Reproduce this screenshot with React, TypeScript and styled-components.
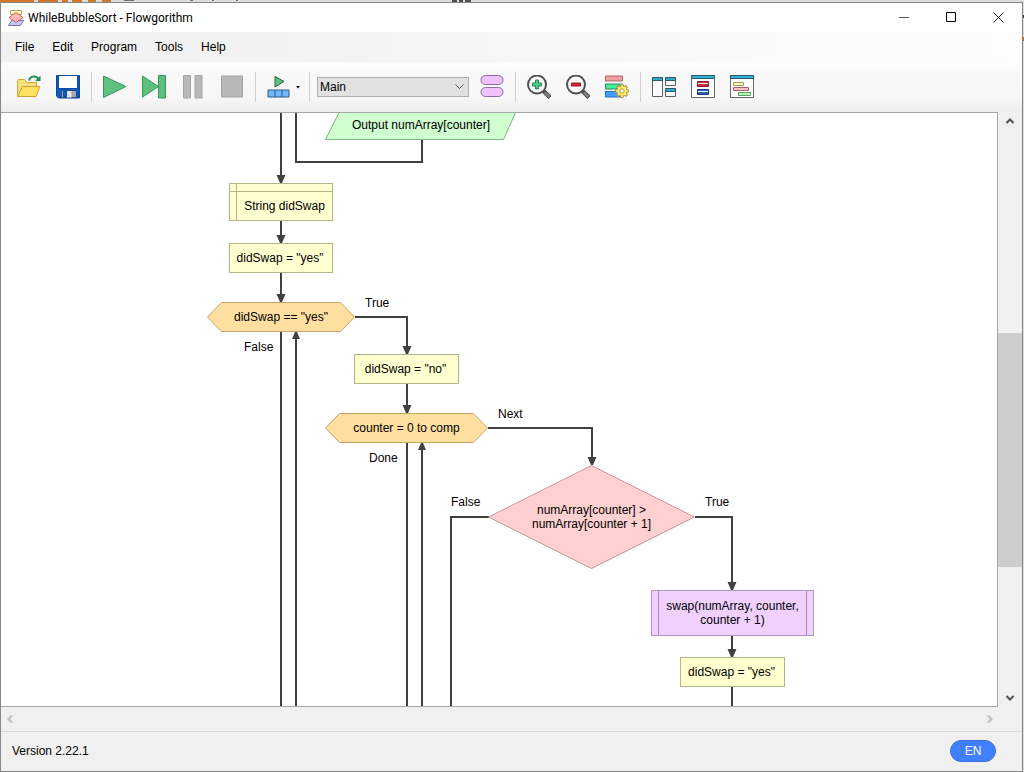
import React from 'react';
import styled, { createGlobalStyle } from 'styled-components';

const GlobalStyle = createGlobalStyle`
  * { box-sizing: border-box; }
  body { margin: 0; background: #dedede; }
  body, button, select { font-family: "Liberation Sans", Arial, sans-serif; font-size: 12px; color: #000; }
  svg { display: block; flex: none; }
`;

const LINE = '#404040';

/* ---------- window frame ---------- */

const Desktop = styled.div`
  position: relative;
  display: flex;
  height: 100vh;
  min-height: 480px;
  padding: 2px 1px 0 0;
  background: #dedede;
`;

const Backdrop = styled.svg`
  position: absolute;
  top: 0;
  left: 0;
`;

const EdgeMarks = styled.svg`
  position: absolute;
  top: 0;
  right: 0;
`;

const Window = styled.div`
  position: relative;
  flex: 1;
  min-width: 0;
  display: flex;
  flex-direction: column;
  border: 1px solid #868686;
  background: #f0f0f0;
`;

const TitleBar = styled.header`
  display: flex;
  align-items: center;
  height: 29px;
  padding-left: 7px;
  background: #fff;
`;

const Title = styled.h1`
  flex: 1;
  margin: 0 0 0 4px;
  font: 400 12px/16px Roboto, "Open Sans", sans-serif;
`;

const PlainButton = styled.button`
  display: flex;
  align-items: center;
  justify-content: center;
  padding: 0;
  border: 0;
  background: none;
`;

const WindowButton = styled(PlainButton)`
  width: 47px;
  height: 29px;
`;

const MenuBar = styled.nav`
  display: flex;
  height: 30px;
  padding-left: 5px;
  background: linear-gradient(90deg, #f0f0f0, #f3f3f3 30%, #fbfbfb 80%, #fcfcfc);
`;

const MenuItem = styled(PlainButton)`
  padding: 0 9px;
`;

const Toolbar = styled.div`
  display: flex;
  align-items: center;
  height: 50px;
  padding: 0 16px;
  background: linear-gradient(#fcfcfc, #f8f8f8 30%, #f7f7f7 70%, #eeeeee);
`;

const ToolGroup = styled.div`
  display: flex;
  align-items: center;
  gap: 15px;
`;

const ToolButton = styled(PlainButton)`
  height: 24px;
`;

const Separator = styled.div<{ $tight?: boolean }>`
  width: 1px;
  height: 30px;
  margin: 0 ${p => (p.$tight ? 7 : 11)}px;
  background: #d0d0d0;
`;

const SelectBox = styled.label`
  position: relative;
  margin-right: 11px;
`;

const FunctionSelect = styled.select`
  display: block;
  width: 152px;
  height: 20px;
  padding: 0 2px;
  border: 1px solid #adadad;
  border-radius: 0;
  background: #e1e1e1;
  appearance: none;
`;

const SelectArrow = styled.svg`
  position: absolute;
  top: 7px;
  right: 5px;
  pointer-events: none;
`;

/* ---------- work area ---------- */

const WorkArea = styled.main`
  flex: 1;
  min-height: 0;
  display: grid;
  grid-template-columns: minmax(0, 1fr) 24px;
  grid-template-rows: minmax(0, 1fr) 24px;
`;

const Canvas = styled.section`
  position: relative;
  overflow: hidden;
  border: solid #a6a6a6;
  border-width: 1px 1px 1px 0;
  background: #fff;
`;

const VerticalScroll = styled.div`
  display: flex;
  flex-direction: column;
`;

const HorizontalScroll = styled.div`
  display: flex;
  justify-content: space-between;
`;

const ScrollButton = styled(PlainButton)`
  width: 24px;
  height: 18px;
`;

const SideScrollButton = styled(PlainButton)`
  width: 17px;
  height: 24px;
`;

const Track = styled.div`
  flex: 1;
  display: grid;
  grid-template-rows: 203fr 235fr 122fr;
`;

const Thumb = styled.div`
  grid-row: 2;
  background: #cdcdcd;
`;

const StatusBar = styled.footer`
  display: flex;
  align-items: center;
  justify-content: space-between;
  height: 40px;
  padding: 0 26px 2px 11px;
  border-top: 1px solid #dadada;
`;

const LanguageButton = styled(PlainButton)`
  width: 46px;
  height: 22px;
  border: 1px solid #3a6fd8;
  border-radius: 11px;
  background: #4080ff;
  color: #fff;
`;

/* ---------- flowchart ---------- */

type Place = { $x: number; $y: number };

const Wires = styled.svg`
  position: absolute;
  top: 0;
  left: 0;
  fill: none;
  stroke: ${LINE};
  stroke-width: 2px;
`;

const Node = styled.div<Place & { $w: number; $h: number }>`
  position: absolute;
  left: ${p => p.$x}px;
  top: ${p => p.$y}px;
  width: ${p => p.$w}px;
  height: ${p => p.$h}px;
  display: flex;
  align-items: center;
  justify-content: center;
  text-align: center;
  line-height: 14px;
`;

const AssignNode = styled(Node)`
  padding-right: 2px;
  border: 1px solid #b4b48c;
  background: #ffffd0;
`;

const DeclareNode = styled(AssignNode)`
  padding: 8px 0 0 7px;
  background:
    linear-gradient(#b4b48c, #b4b48c) 0 7px / 100% 1px no-repeat,
    linear-gradient(#b4b48c, #b4b48c) 6px 0 / 1px 100% no-repeat,
    #ffffd0;
`;

const CallNode = styled(Node)`
  border: 1px solid #b496c3;
  background:
    linear-gradient(#a888b8, #a888b8) 6px 0 / 1px 100% no-repeat,
    linear-gradient(#a888b8, #a888b8) right 6px top 0 / 1px 100% no-repeat,
    #f0d0ff;
`;

const ShapeSvg = styled.svg`
  position: absolute;
  inset: 0;
  overflow: visible;
`;

const NodeText = styled.span`
  position: relative;
`;

const Label = styled.span<Place>`
  position: absolute;
  left: ${p => p.$x}px;
  top: ${p => p.$y}px;
  line-height: 14px;
`;

type ShapeProps = {
  x: number; y: number; w: number; h: number;
  points: string; fill: string; stroke: string; children: React.ReactNode;
};

function ShapeNode({ x, y, w, h, points, fill, stroke, children }: ShapeProps) {
  return (
    <Node $x={x} $y={y} $w={w} $h={h}>
      <ShapeSvg width={w} height={h} aria-hidden="true">
        <polygon points={points} fill={fill} stroke={stroke} />
      </ShapeSvg>
      <NodeText>{children}</NodeText>
    </Node>
  );
}

function LoopNode({ x, y, w, children }: { x: number; y: number; w: number; children: React.ReactNode }) {
  return (
    <ShapeNode
      x={x} y={y} w={w} h={30}
      points={`0.5,15 14.5,0.5 ${w - 14.5},0.5 ${w - 0.5},15 ${w - 14.5},29.5 14.5,29.5`}
      fill="#ffdfa0" stroke="#c8a668"
    >
      {children}
    </ShapeNode>
  );
}

const wires = [
  'M280 0V66', 'M295 0V49H421V27', 'M280 108V125', 'M280 160V184',
  'M354 204H406V236', 'M280 219V700', 'M295 700V224', 'M406 271V295',
  'M487 315H591V347', 'M406 330V700', 'M421 700V335', 'M488 404H450V700',
  'M694 404H731V472', 'M731 523V539', 'M731 574V700',
];

const arrowsDown: [number, number][] = [
  [280, 70], [280, 130], [280, 189], [406, 241], [406, 300], [591, 352], [731, 477], [731, 544],
];

const arrowsUp: [number, number][] = [[295, 219], [421, 330]];

function Flowchart() {
  return (
    <>
      <Wires width="996" height="700" aria-hidden="true">
        {wires.map(d => <path key={d} d={d} />)}
        <g fill={LINE} stroke="none">
          {arrowsDown.map(([x, y]) => <path key={`${x}-${y}`} d={`M${x - 4.5} ${y - 8}H${x + 4.5}L${x + 1} ${y}H${x - 1}Z`} />)}
          {arrowsUp.map(([x, y]) => <path key={`${x}-${y}`} d={`M${x - 4} ${y + 7}H${x + 4}L${x + 1} ${y}H${x - 1}Z`} />)}
        </g>
      </Wires>

      <ShapeNode x={324} y={-3} w={192} h={30} points="15,0.5 191.5,0.5 178.5,29.5 0.5,29.5" fill="#d0ffd0" stroke="#80b480">
        Output numArray[counter]
      </ShapeNode>
      <DeclareNode $x={228} $y={70} $w={104} $h={38}>String didSwap</DeclareNode>
      <AssignNode $x={228} $y={130} $w={104} $h={30}>didSwap = "yes"</AssignNode>
      <LoopNode x={206} y={189} w={148}>didSwap == "yes"</LoopNode>
      <AssignNode $x={353} $y={241} $w={105} $h={30}>didSwap = "no"</AssignNode>
      <LoopNode x={324} y={300} w={163}>counter = 0 to comp</LoopNode>
      <ShapeNode x={487} y={352} w={207} h={104} points="0.5,52 103.5,0.5 206.5,52 103.5,103.5" fill="#ffd0d0" stroke="#c49696">
        numArray[counter] &gt;<br />numArray[counter + 1]
      </ShapeNode>
      <CallNode $x={650} $y={477} $w={163} $h={46}>swap(numArray, counter,<br />counter + 1)</CallNode>
      <AssignNode $x={679} $y={544} $w={105} $h={30}>didSwap = "yes"</AssignNode>

      <Label $x={364} $y={183}>True</Label>
      <Label $x={243} $y={227}>False</Label>
      <Label $x={497} $y={294}>Next</Label>
      <Label $x={368} $y={338}>Done</Label>
      <Label $x={450} $y={382}>False</Label>
      <Label $x={704} $y={382}>True</Label>
    </>
  );
}

/* ---------- icons ---------- */

function Icon({ children, size = 24 }: { children: React.ReactNode; size?: number }) {
  return <svg width={size} height={size} viewBox={`0 0 ${size} ${size}`} fill="none" aria-hidden="true">{children}</svg>;
}

const AppIcon = () => (
  <Icon size={16}>
    <path d="M3.5 10.5h12l-3 5h-12z" fill="#c8c8ff" stroke="#7474c0" />
    <path d="M2.5.5h11v4h-11z" fill="#ffffb8" stroke="#b8a060" />
    <path d="M8 2.5l7 5-7 5-7-5z" fill="#ffb8b8" stroke="#c86464" />
  </Icon>
);

const OpenIcon = () => (
  <Icon>
    <path d="M.5 21V5.500l1-1h6l2 3h10v4" fill="#f4e07c" stroke="#d0a838" />
    <path d="M.5 21.500l5-10h17.500l-4 10z" fill="#ffe060" stroke="#d0a030" />
    <path d="M12 5.500c1-5 8-5.500 9.500-1" stroke="#2c8c58" strokeWidth="2" />
    <path d="M18 6h5.500V.500z" fill="#2c8c58" />
  </Icon>
);

const SaveIcon = () => (
  <Icon>
    <path d="M.5.5h23v22.500H2.500l-2-2z" fill="#0c5cc4" stroke="#0a48a0" />
    <path d="M3 1h18v12H3z" fill="#fff" />
    <path d="M2.500 1v12.500h19V1" stroke="#0a48a0" />
    <path d="M5.500 15.500h15v7h-15z" fill="#a8a8b0" stroke="#284888" />
    <path d="M11 16h4.500v6.500H11z" fill="#e4e4e4" />
    <path d="M7.500 16.500h3v5h-3z" fill="#0c5cc4" stroke="#0a48a0" />
  </Icon>
);

const PlayIcon = () => <Icon><path d="M.5 1v21.500L23 11.500z" fill="#60c080" stroke="#309858" /></Icon>;
const StepIcon = () => (
  <Icon>
    <path d="M.5 1v21L16.500 11.500z" fill="#60c080" stroke="#309858" />
    <path d="M16.500.5h7v22.500h-7z" fill="#60c080" stroke="#309858" />
  </Icon>
);
const PauseIcon = () => <Icon><path d="M2.500.5h7v22.500h-7zM14 .5h7v22.500h-7z" fill="#b8b8b8" stroke="#a4a4a4" /></Icon>;
const StopIcon = () => <Icon><path d="M1.500 1h21v21h-21z" fill="#b8b8b8" stroke="#a4a4a4" /></Icon>;

const SpeedIcon = () => (
  <svg width="35" height="24" viewBox="0 0 35 24" fill="none" aria-hidden="true">
    <path d="M8 1.500v10.500l9-5.500z" fill="#60c080" stroke="#305840" />
    <path d="M1 15h21v7H1zM8 15v7M15 15v7" fill="#70b8ff" stroke="#305880" />
    <path d="M29 11h4l-2 2.500z" fill="#000" />
  </svg>
);

const FunctionsIcon = () => (
  <Icon>
    <rect x="1" y=".5" width="22" height="9" rx="4.500" fill="#f0c0ff" stroke="#8c6c9c" />
    <rect x="1" y="12.500" width="22" height="9" rx="4.500" fill="#f0c0ff" stroke="#8c6c9c" />
  </Icon>
);

const Magnifier = ({ children }: { children: React.ReactNode }) => (
  <Icon>
    <path d="M16 15.500l7 7" stroke="#505050" strokeWidth="4.500" />
    <path d="M18 17.500l4.300 4.300" stroke="#808080" strokeWidth="2.500" />
    <circle cx="10" cy="9.500" r="9" fill="#fafafa" stroke="#505050" strokeWidth="2" />
    {children}
  </Icon>
);

const ZoomInIcon = () => (
  <Magnifier>
    <path d="M8.500 5h3v3h3v3h-3v3h-3v-3h-3V8h3z" fill="#50c888" stroke="#288850" />
  </Magnifier>
);

const ZoomOutIcon = () => <Magnifier><path d="M5.500 8h9v3h-9z" fill="#d02838" stroke="#a01824" /></Magnifier>;

const gearTeeth = [0, 45, 90, 135, 180, 225, 270, 315];

const StyleIcon = () => (
  <Icon>
    <path d="M.5 1h17v5H.5z" fill="#f4a0a0" stroke="#a86868" />
    <path d="M.5 9h17v5H.5z" fill="#40f0a0" stroke="#308860" />
    <path d="M.5 16.500h17v5.500H.5z" fill="#40a0ff" stroke="#3070b0" />
    {gearTeeth.map(a => (
      <path key={a} d="M15.500 12l.4-2.500h2.200l.4 2.500" transform={`rotate(${a} 17 16)`} fill="#fff070" stroke="#b09438" />
    ))}
    <circle cx="17" cy="16" r="4.600" fill="#fff070" />
    <circle cx="17" cy="16" r="2.200" fill="#fff" stroke="#b09438" />
  </Icon>
);

const LayoutIcon = () => (
  <Icon>
    <path d="M.5 2.500h10v19H.5zM13.500 2.500h10v8h-10zM13.500 13.500h10v8h-10z" fill="#fff" stroke="#606060" />
    <path d="M.5 2.500h10v3H.5zM13.500 2.500h10v3h-10zM13.500 13.500h10v3h-10z" fill="#30a8d0" stroke="#305868" />
  </Icon>
);

const PanelFrame = () => (
  <>
    <path d="M.5.5h23v22H.5z" fill="#fff" stroke="#686868" />
    <path d="M.5.5h23v3H.5z" fill="#30b0d8" stroke="#305868" />
  </>
);

const VariablesIcon = () => (
  <Icon>
    <PanelFrame />
    <path d="M6.500 6.500h11v5h-11z" fill="#c83040" stroke="#901828" />
    <path d="M7 8.500h10" stroke="#fff" />
    <path d="M6.500 14.500h11v5h-11z" fill="#2860c0" stroke="#183880" />
    <path d="M7 16.500h10" stroke="#fff" />
  </Icon>
);

const ConsoleIcon = () => (
  <Icon>
    <PanelFrame />
    <path d="M3.500 7.500h10v3h-10z" fill="#fff8b0" stroke="#a09858" />
    <path d="M3.500 12.500h15v3h-15z" fill="#ffc0c8" stroke="#a86068" />
    <path d="M8.500 17.500h12v3h-12z" fill="#c0ffc0" stroke="#58a060" />
  </Icon>
);

const Chevron = ({ d, color }: { d: string; color: string }) => (
  <svg width="10" height="10" viewBox="0 0 10 10" fill="none" aria-hidden="true">
    <path d={d} stroke={color} strokeWidth="2" />
  </svg>
);

/* ---------- page ---------- */

const menus = ['File', 'Edit', 'Program', 'Tools', 'Help'];

const Tool = ({ label, children }: { label: string; children: React.ReactNode }) => (
  <ToolButton type="button" aria-label={label} title={label}>{children}</ToolButton>
);

export default function App() {
  return (
    <Desktop>
      <GlobalStyle />
      <Backdrop width="600" height="2" aria-hidden="true">
        <path d="M0 1h34M38 1h20M62 1h6M72 1h10M88 1h8M102 1h9" stroke="#d07828" strokeWidth="2" />
        <path d="M124 .5h10M190 .5h3M212 .5h2M236 .5h2" stroke="#707070" />
        <path d="M452 1h5M459 1h4M465 1h6" stroke="#505050" strokeWidth="2" />
      </Backdrop>
      <EdgeMarks width="1" height="60" aria-hidden="true">
        <path d="M0 15h1v3H0z" fill="#404040" />
        <path d="M0 37h1v4H0z" fill="#c87020" />
      </EdgeMarks>
      <Window>
        <TitleBar>
          <AppIcon />
          <Title>WhileBubbleSort - Flowgorithm</Title>
          <WindowButton type="button" aria-label="Minimize">
            <Icon size={11}><path d="M0 5.500h10" stroke="#555" /></Icon>
          </WindowButton>
          <WindowButton type="button" aria-label="Maximize">
            <Icon size={11}><path d="M.5.5h9v9h-9z" stroke="#000" /></Icon>
          </WindowButton>
          <WindowButton type="button" aria-label="Close">
            <Icon size={11}><path d="M.5.5l10 10M10.500.5l-10 10" stroke="#222" /></Icon>
          </WindowButton>
        </TitleBar>

        <MenuBar aria-label="Main menu">
          {menus.map(m => <MenuItem type="button" key={m}>{m}</MenuItem>)}
        </MenuBar>

        <Toolbar role="toolbar" aria-label="Tools">
          <ToolGroup>
            <Tool label="Open"><OpenIcon /></Tool>
            <Tool label="Save"><SaveIcon /></Tool>
          </ToolGroup>
          <Separator />
          <ToolGroup>
            <Tool label="Run"><PlayIcon /></Tool>
            <Tool label="Step"><StepIcon /></Tool>
            <Tool label="Pause"><PauseIcon /></Tool>
            <Tool label="Stop"><StopIcon /></Tool>
          </ToolGroup>
          <Separator />
          <Tool label="Run speed"><SpeedIcon /></Tool>
          <Separator $tight />
          <SelectBox>
            <FunctionSelect aria-label="Function" defaultValue="Main">
              <option>Main</option>
            </FunctionSelect>
            <SelectArrow width="9" height="6" viewBox="0 0 9 6" fill="none" aria-hidden="true">
              <path d="M.5.5l4 4 4-4" stroke="#505050" />
            </SelectArrow>
          </SelectBox>
          <Tool label="Functions"><FunctionsIcon /></Tool>
          <Separator />
          <ToolGroup>
            <Tool label="Zoom in"><ZoomInIcon /></Tool>
            <Tool label="Zoom out"><ZoomOutIcon /></Tool>
            <Tool label="Chart style"><StyleIcon /></Tool>
          </ToolGroup>
          <Separator />
          <ToolGroup>
            <Tool label="Layout"><LayoutIcon /></Tool>
            <Tool label="Variable watch"><VariablesIcon /></Tool>
            <Tool label="Console"><ConsoleIcon /></Tool>
          </ToolGroup>
        </Toolbar>

        <WorkArea>
          <Canvas aria-label="Flowchart"><Flowchart /></Canvas>
          <VerticalScroll>
            <ScrollButton type="button" aria-label="Scroll up"><Chevron d="M1.500 7L5 3.500 8.500 7" color="#505050" /></ScrollButton>
            <Track><Thumb /></Track>
            <ScrollButton type="button" aria-label="Scroll down"><Chevron d="M1.500 3L5 6.500 8.500 3" color="#505050" /></ScrollButton>
          </VerticalScroll>
          <HorizontalScroll>
            <SideScrollButton type="button" aria-label="Scroll left"><Chevron d="M7 1.500L3.500 5 7 8.500" color="#bfbfbf" /></SideScrollButton>
            <SideScrollButton type="button" aria-label="Scroll right"><Chevron d="M3 1.500L6.500 5 3 8.500" color="#bfbfbf" /></SideScrollButton>
          </HorizontalScroll>
        </WorkArea>

        <StatusBar>
          <span>Version 2.22.1</span>
          <LanguageButton type="button">EN</LanguageButton>
        </StatusBar>
      </Window>
    </Desktop>
  );
}
